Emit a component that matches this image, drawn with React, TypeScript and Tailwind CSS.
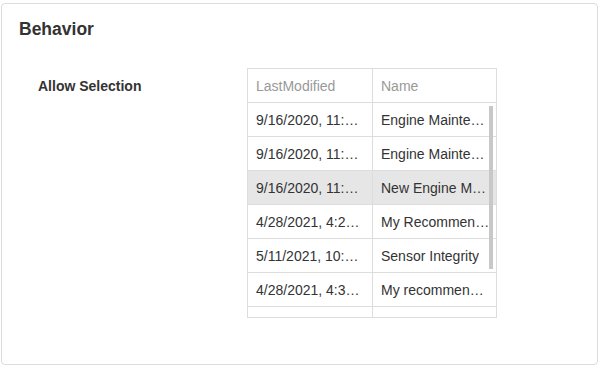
const rows = [
  { modified: '9/16/2020, 11:32:14 AM', name: 'Engine Maintenance Plan', selected: false },
  { modified: '9/16/2020, 11:40:02 AM', name: 'Engine Maintenance Review', selected: false },
  { modified: '9/16/2020, 11:52:47 AM', name: 'New Engine Model', selected: true },
  { modified: '4/28/2021, 4:21:09 PM', name: 'My Recommendations', selected: false },
  { modified: '5/11/2021, 10:05:33 AM', name: 'Sensor Integrity', selected: false },
  { modified: '4/28/2021, 4:36:50 PM', name: 'My recommendations 2', selected: false },
  { modified: '4/29/2021, 9:12:00 AM', name: 'Fleet Overview', selected: false },
];

export default function App() {
  return (
    <div className="w-[602px] h-[368px] bg-white pt-[3px] pl-[1px] font-['Liberation_Sans',Arial,sans-serif]">
      <div className="w-[597px] h-[362px] border border-[#dcdcdc] rounded-[4px] bg-white">
        <h2 className="pl-[17px] pt-[15px] text-[17.5px] leading-[21px] font-bold text-[#333]">Behavior</h2>

        <div className="flex mt-[28px] pl-[36px]">
          <div className="w-[209px] pt-[10px] text-[14px] leading-[16px] font-bold text-[#333]">Allow Selection</div>

          <div className="w-[250px] h-[250px] border border-[#dddddd] overflow-hidden text-[14px] leading-[16px]">
            <div className="flex h-[34px] border-b border-[#dddddd] text-[#999]">
              <div className="w-[125px] border-r border-[#dddddd] pl-[8px] flex items-center">LastModified</div>
              <div className="flex-1 pl-[8px] flex items-center">Name</div>
            </div>
            <div className="relative">
              {rows.map((r, i) => (
                <div
                  key={i}
                  className={`flex h-[34px] border-b border-[#dddddd] text-[#333] ${r.selected ? 'bg-[#e6e6e6]' : ''}`}
                >
                  <div className="w-[125px] border-r border-[#dddddd] pl-[8px] pr-[12px] flex items-center min-w-0">
                    <span className="truncate">{r.modified}</span>
                  </div>
                  <div className="flex-1 min-w-0 pl-[8px] pr-[5px] flex items-center">
                    <span className="truncate">{r.name}</span>
                  </div>
                </div>
              ))}
              <div className="absolute right-[3px] top-[3px] w-[4px] h-[163px] bg-[#c8c8c8]" />
            </div>
          </div>
        </div>
      </div>
    </div>
  );
}
